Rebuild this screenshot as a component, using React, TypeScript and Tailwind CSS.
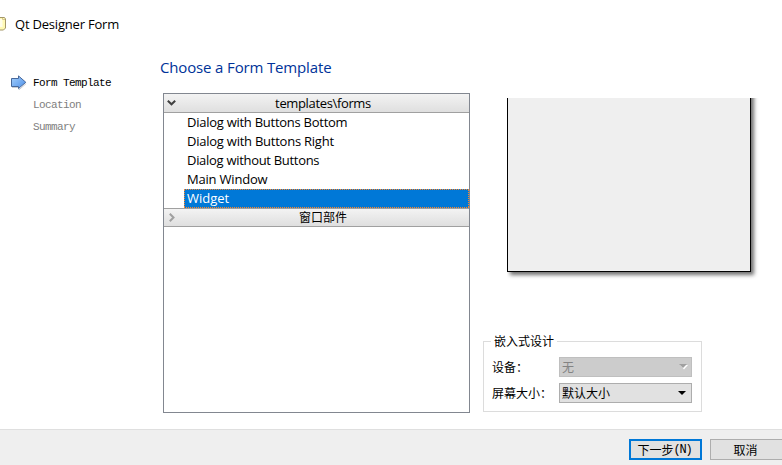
import React from "react";

const ui = "font-['Open_Sans','Noto_Sans_CJK_SC',sans-serif]";
const mono = "font-['Liberation_Mono','Noto_Sans_CJK_SC',monospace]";
const cjk = "font-['Noto_Sans_CJK_SC',sans-serif]";

const templates = [
  { name: "Dialog with Buttons Bottom", spacing: "tracking-[-0.26px]" },
  { name: "Dialog with Buttons Right", spacing: "tracking-[-0.24px]" },
  { name: "Dialog without Buttons", spacing: "tracking-[-0.3px]" },
  { name: "Main Window", spacing: "tracking-[-0.2px]" },
];

function FormIcon() {
  return (
    <svg width="7" height="18" viewBox="0 0 7 18" className="-mt-0.5 shrink-0">
      <path d="M0 2.5H4.5L5.5 4V13L3.5 15H0" fill="#fff9b4" stroke="#a39668" />
      <path d="M0 4H2.5V12H0Z" fill="#fffde8" />
      <path d="M2.5 3V4.5H5" fill="none" stroke="#d7c98e" />
    </svg>
  );
}

function StepArrow() {
  return (
    <svg width="17" height="16" viewBox="0 0 17 16" className="shrink-0">
      <defs>
        <linearGradient id="arrow" x1="0" y1="0" x2="1" y2="1">
          <stop offset="0" stopColor="#a5d0fb" />
          <stop offset="1" stopColor="#4b8ee8" />
        </linearGradient>
      </defs>
      <path d="M2 12.5H9V14.8L16.2 8.5" fill="none" stroke="#c9cdd2" />
      <path d="M1.5 3.5H8.5V0.9L15.8 7.3L8.5 13.5V11.5H1.5Z" fill="url(#arrow)" stroke="#47689b" />
    </svg>
  );
}

function Category({ open, children }: { open: boolean; children: React.ReactNode }) {
  return (
    <div
      className={`flex shrink-0 items-center border-b border-[#a0a0a0] bg-linear-to-b from-[#f3f3f3] to-[#dfdfdf] ${open ? "h-[19px] tracking-[-0.35px]" : "h-[18px]"}`}
    >
      <svg width="16" height="18" viewBox="0 0 16 18" className="shrink-0">
        {open ? (
          <path d="M3.8 6.8L7.5 10.3L11.2 6.8" fill="none" stroke="#404040" strokeWidth="2" />
        ) : (
          <path d="M5.8 4.8L9.5 8.5L5.8 12.2" fill="none" stroke="#a0a0a0" strokeWidth="2" />
        )}
      </svg>
      <span className="flex-1 pr-[3px] text-center">{children}</span>
    </div>
  );
}

const dotsX = "bg-[repeating-linear-gradient(90deg,#ff8728_0_1px,#0078d7_1px_2px)]";
const dotsY = "bg-[repeating-linear-gradient(180deg,#ff8728_0_1px,#0078d7_1px_2px)]";

export default function App() {
  return (
    <div className={`${ui} flex h-[465px] w-[782px] flex-col overflow-hidden bg-white text-[13px] leading-[18px] text-black`}>
      <header className="flex h-[50px] shrink-0 items-center gap-2 whitespace-nowrap">
        <FormIcon />
        <span className="-mt-0.5 tracking-[-0.2px]">Qt Designer Form</span>
      </header>
      <main className="flex h-[379px] shrink-0">
        <nav className={`${mono} w-[160px] shrink-0 pt-[22px] pl-[10px] text-[11px] leading-[22px] tracking-[-0.6px] text-[#7e7e7e]`}>
          <div className="mb-px flex h-[21px] items-center gap-[6px] whitespace-nowrap text-black">
            <StepArrow />
            Form Template
          </div>
          <div className="pl-[23px]">Location</div>
          <div className="pl-[23px]">Summary</div>
        </nav>
        <section className="w-[323px] shrink-0">
          <h1 className="h-[43px] pt-[5px] text-[15px] leading-[24px] tracking-[-0.15px] whitespace-nowrap text-[#003399]">
            Choose a Form Template
          </h1>
          <div className="ml-[3px] flex h-[320px] w-[307px] flex-col border border-[#828790] bg-white">
            <Category open>templates\forms</Category>
            {templates.map((t) => (
              <div key={t.name} className={`h-[19px] shrink-0 pl-[23px] leading-[19px] whitespace-nowrap ${t.spacing}`}>
                {t.name}
              </div>
            ))}
            <div className="ml-[20px] flex h-[19px] shrink-0 flex-col text-white">
              <div className={`h-px ${dotsX}`} />
              <div className="flex h-[17px] bg-[#0078d7] leading-[17px]">
                <div className={`w-px ${dotsY}`} />
                <span className="flex-1 pl-[2px]">Widget</span>
                <div className={`w-px ${dotsY}`} />
              </div>
              <div className={`h-px ${dotsX}`} />
            </div>
            <div className="border-t border-[#a0a0a0] text-[12px]">
              <Category open={false}>窗口部件</Category>
            </div>
          </div>
        </section>
        <section className="w-[299px] shrink-0 pt-[32px]">
          <div className="ml-[24px] h-[190px] w-[244px] border-r border-b border-l border-black bg-[#efefef] shadow-[3px_3px_4px_#00000090] [clip-path:inset(16px_-8px_-8px_0px)]" />
          <fieldset className={`${cjk} mt-[60px] h-[80px] w-[219px] border border-[#dcdcdc] text-[12px]`}>
            <legend className="ml-[7px] h-[18px] px-[3px] leading-[18px]">嵌入式设计</legend>
            <div className="mt-[7px] flex h-[20px] items-center pl-[8px]">
              <span className="w-[67px] shrink-0">设备：</span>
              <div className="flex h-[20px] w-[133px] items-center justify-between border border-[#bfbfbf] bg-[#cccccc] pr-[3px] pl-[2px] text-[#838383]">
                无
                <svg width="9" height="6" viewBox="0 0 9 6">
                  <path d="M1 1H9L5 5.5Z" fill="white" />
                  <path d="M0 0H8L4 4Z" fill="#a0a0a0" />
                </svg>
              </div>
            </div>
            <div className="mt-[6px] flex h-[20px] items-center pl-[8px]">
              <span className="w-[67px] shrink-0 whitespace-nowrap">屏幕大小：</span>
              <div className="flex h-[20px] w-[133px] items-center justify-between border border-[#adadad] bg-[#e1e1e1] pr-[5px] pl-[2px]">
                默认大小
                <svg width="8" height="4" viewBox="0 0 8 4">
                  <path d="M0 0H8L4 4Z" fill="black" />
                </svg>
              </div>
            </div>
          </fieldset>
        </section>
      </main>
      <footer className={`${cjk} flex h-[36px] shrink-0 gap-2 border-t border-[#dfdfdf] bg-[#efefef] pt-[9px] pl-[629px] text-[12px]`}>
        <button className="flex h-[21px] w-[73px] shrink-0 items-center justify-center border-2 border-[#0078d7] bg-[#e1e1e1] pr-[2px]">
          下一步<span className="font-['Liberation_Mono',monospace] tracking-[-1.2px]">(N)</span>
        </button>
        <button className="flex h-[21px] w-[73px] shrink-0 items-center justify-center border border-[#adadad] bg-[#e1e1e1] pr-[2px]">
          取消
        </button>
      </footer>
    </div>
  );
}
